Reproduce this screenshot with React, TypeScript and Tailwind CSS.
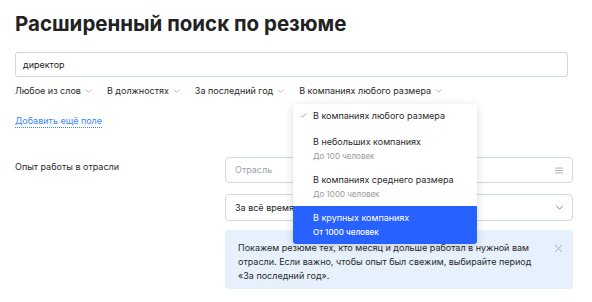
import React from 'react';

const Chevron = ({ className = '' }: { className?: string }) => (
  <svg viewBox="0 0 10 6" className={className} fill="none" stroke="currentColor" strokeWidth="1.1">
    <path d="M1 1l4 4 4-4" />
  </svg>
);

const FilterLink = ({ label }: { label: string }) => (
  <span className="flex items-center gap-[4px] text-[9px] text-[#2a2a2a]">
    {label}
    <Chevron className="w-[7px] h-[4px] text-[#999]" />
  </span>
);

const options = [
  { title: 'В компаниях любого размера', sub: '', checked: true },
  { title: 'В небольших компаниях', sub: 'До 100 человек' },
  { title: 'В компаниях среднего размера', sub: 'До 1000 человек' },
  { title: 'В крупных компаниях', sub: 'От 1000 человек', active: true },
];

const App: React.FC = () => {
  return (
    <div className="relative w-[592px] h-[302px] overflow-hidden bg-white font-['Inter',sans-serif] text-[#2a2a2a]">
      <div className="px-[15px] pt-[9px]">
        <h1 className="text-[20.5px] leading-[30px] font-bold text-[#222]">Расширенный поиск по резюме</h1>

        <div className="mt-[13px] mr-[9px] h-[25px] flex items-center px-[7px] border border-[#cfd8e0] rounded-[3px] text-[9px] text-[#222]">
          директор
        </div>

        <div className="mt-[7px] h-[14px] flex items-center gap-[15px]">
          <FilterLink label="Любое из слов" />
          <FilterLink label="В должностях" />
          <FilterLink label="За последний год" />
          <FilterLink label="В компаниях любого размера" />
        </div>

        <div className="mt-[16px] h-[14px] flex items-center">
          <span className="text-[9px] text-[#3d86f5] border-b border-dotted border-[#3d86f5] leading-[12px]">Добавить ещё поле</span>
        </div>

        <div className="mt-[29px] flex">
          <div className="w-[210px] pt-[3px] text-[9px] leading-[14px]">Опыт работы в отрасли</div>
          <div className="w-[348px] flex flex-col gap-[11px]">
            <div className="h-[26px] flex items-center justify-between pl-[9px] pr-[9px] border border-[#cfd8e0] rounded-[4px] text-[9px] text-[#9aa3ab]">
              Отрасль
              <svg viewBox="0 0 10 8" className="w-[8px] h-[7px]" stroke="#9aa3ab" strokeWidth="1">
                <path d="M0 1h10M0 4h10M0 7h10" />
              </svg>
            </div>
            <div className="h-[27px] flex items-center justify-between pl-[9px] pr-[8px] border border-[#cfd8e0] rounded-[4px] text-[9px] text-[#222]">
              За всё время
              <Chevron className="w-[9px] h-[5px] text-[#777]" />
            </div>
            <div className="mt-[-2px] h-[59px] flex justify-between bg-[#e6f1fd] rounded-[3px] pl-[13px] pr-[11px] pt-[11px]">
              <p className="text-[9px] leading-[14px] w-[305px]">
                Покажем резюме тех, кто месяц и дольше работал в нужной вам отрасли. Если важно, чтобы опыт был свежим, выбирайте период «За последний год».
              </p>
              <svg viewBox="0 0 8 8" className="w-[7px] h-[7px] mt-[4px]" stroke="#9aa3ab" strokeWidth="1">
                <path d="M0 0l8 8M8 0L0 8" />
              </svg>
            </div>
          </div>
        </div>
      </div>

      <div className="absolute left-[293px] top-[104px] w-[184px] bg-white rounded-[3px] shadow-[0_2px_10px_rgba(0,0,0,0.15)] overflow-hidden">
        {options.map((o) => (
          <div
            key={o.title}
            className={`relative pl-[20px] pr-[8px] pt-[5px] ${o.sub ? 'h-[38px]' : 'h-[26px]'} ${o.active ? 'bg-[#2761ff] text-white' : 'text-[#2a2a2a]'}`}
          >
            {o.checked && (
              <svg viewBox="0 0 8 6" className="absolute left-[7px] top-[9px] w-[7px] h-[5px]" fill="none" stroke="#999" strokeWidth="1">
                <path d="M0.5 3l2 2 5-4.5" />
              </svg>
            )}
            <div className="text-[9px] leading-[14px]">{o.title}</div>
            {o.sub && (
              <div className={`text-[8px] leading-[12px] mt-[1px] ${o.active ? 'text-white font-medium' : 'text-[#999]'}`}>{o.sub}</div>
            )}
          </div>
        ))}
      </div>
    </div>
  );
};

export default App;
